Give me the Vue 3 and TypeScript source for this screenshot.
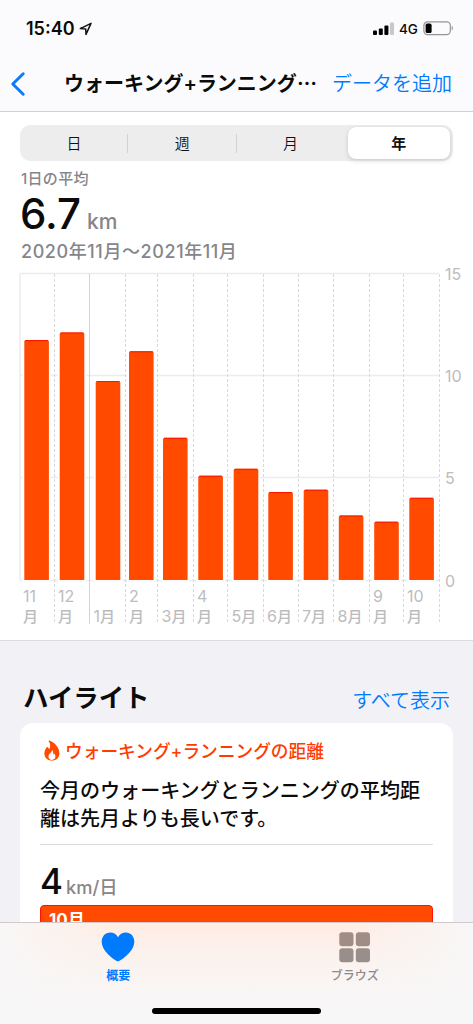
<script setup lang="ts">
import { ref } from 'vue'

interface MonthBar {
  x: number
  top: number
  tick: number
  num: string
  wrap: boolean
  labelX: number
}

const ranges = ['日', '週', '月', '年']
const selected = ref(3)

const base = 580
const months: MonthBar[] = [
  { x: 24.3, top: 340, tick: 54.5, num: '11', wrap: true, labelX: 23 },
  { x: 59.7, top: 332.5, tick: 89.5, num: '12', wrap: true, labelX: 58 },
  { x: 95.7, top: 381, tick: 125.5, num: '1', wrap: false, labelX: 93.5 },
  { x: 129, top: 351.3, tick: 157.5, num: '2', wrap: true, labelX: 129 },
  { x: 163, top: 437.8, tick: 193.5, num: '3', wrap: false, labelX: 161.5 },
  { x: 198.3, top: 475.7, tick: 227.5, num: '4', wrap: true, labelX: 197 },
  { x: 233.7, top: 468.8, tick: 263.5, num: '5', wrap: false, labelX: 231.5 },
  { x: 268.3, top: 492, tick: 298.5, num: '6', wrap: false, labelX: 267 },
  { x: 303.7, top: 489.7, tick: 333.5, num: '7', wrap: false, labelX: 302 },
  { x: 338.8, top: 515.5, tick: 369.5, num: '8', wrap: false, labelX: 337.5 },
  { x: 374.2, top: 521.7, tick: 403.5, num: '9', wrap: true, labelX: 373 },
  { x: 409.3, top: 497.8, tick: 439.5, num: '10', wrap: true, labelX: 407 },
]
const levels = [
  { y: 273.5, label: '15' },
  { y: 375.5, label: '10' },
  { y: 477.5, label: '5' },
  { y: 580.5, label: '0' },
]
</script>

<template>
  <div class="screen">
    <header class="top">
      <div class="status">
        <span class="time">15:40</span>
        <svg class="loc" width="14" height="14" viewBox="0 0 14 14">
          <path d="M1.3 6.6 12 1.4 7 12.4 6.7 7Z" fill="none" stroke="#111" stroke-width="1.5" stroke-linejoin="round" />
        </svg>
        <svg class="signal" width="22" height="14" viewBox="0 0 22 14">
          <rect x="0" y="8.6" width="4" height="4.4" rx="1" />
          <rect x="5.8" y="6.4" width="4" height="6.6" rx="1" />
          <rect x="11.4" y="3.6" width="4" height="9.4" rx="1" />
          <rect x="17" y="0.6" width="4" height="12.4" rx="1" fill="#c8c8ca" />
        </svg>
        <span class="net">4G</span>
        <svg class="battery" width="31" height="15" viewBox="0 0 31 15">
          <rect x="0.9" y="0.9" width="26.4" height="12.8" rx="3.6" fill="none" stroke="#949496" stroke-width="1.2" />
          <rect x="2.6" y="2.6" width="6" height="9.4" rx="1.6" fill="#000" />
          <path d="M28.7 5.1c1.6.6 1.6 3.8 0 4.4z" fill="#949496" />
        </svg>
      </div>
      <nav class="nav">
        <svg class="back" width="16" height="26" viewBox="0 0 16 26">
          <path d="M13.2 2.8 2.8 13l10.4 10.2" fill="none" stroke="#0a7aff" stroke-width="3" stroke-linecap="round" stroke-linejoin="round" />
        </svg>
        <h1 class="title">ウォーキング<span class="plus">+</span>ランニング<span class="dots">⋯</span></h1>
        <a class="add">データを追加</a>
      </nav>
    </header>

    <main class="body">
      <section class="summary">
        <div class="segments">
          <button
            v-for="(r, i) in ranges"
            :key="r"
            class="segment"
            :class="{ on: i === selected, line: i < 2 }"
            @click="selected = i"
          >{{ r }}</button>
        </div>
        <p class="caption">1日の平均</p>
        <p class="average"><span class="value">6.7</span><span class="unit">km</span></p>
        <p class="period">2020年11月〜2021年11月</p>
        <svg class="chart" width="473" height="378" viewBox="0 262 473 378">
          <g class="grid">
            <path v-for="l in levels" :key="l.label" :d="`M20 ${l.y}H439`" />
            <path d="M20 273V580" />
          </g>
          <path
            v-for="m in months"
            :key="m.tick"
            class="tick"
            :class="{ year: m.num === '12' }"
            :d="`M${m.tick} 274V624`"
          />
          <g v-for="m in months" :key="m.num">
            <rect :x="m.x - 2" :y="m.top - 1" width="28.6" :height="base - m.top + 2" fill="#fff" />
            <path
              class="bar"
              :d="`M${m.x} ${base}V${m.top + 1.5}q0 -1.5 1.5 -1.5h21.6q1.5 0 1.5 1.5V${base}z`"
            />
            <path class="edge" :d="`M${m.x + 1} ${m.top + 0.5}h22.6`" />
            <template v-if="m.wrap">
              <text :x="m.labelX" y="602.3">{{ m.num }}</text>
              <text class="kanji" :x="m.labelX" y="621.5">月</text>
            </template>
            <text v-else :x="m.labelX" y="621.5">{{ m.num }}<tspan class="kanji">月</tspan></text>
          </g>
          <text v-for="l in levels" :key="l.y" x="445" :y="l.y + 6.3">{{ l.label }}</text>
        </svg>
      </section>

      <section class="highlights">
        <div class="head">
          <h2>ハイライト</h2>
          <a>すべて表示</a>
        </div>
        <article class="card">
          <div class="topic">
            <svg width="16" height="21" viewBox="0 0 16 21">
              <path fill="#ff4a00" fill-rule="evenodd" d="M5.1.4C10.2 1.8 15.4 7.1 15.4 13.2c0 4.3-3 7.4-7.5 7.4S.4 17.7.4 13.5c0-2.5 1-4.7 2.4-6.3.5-.5 1.1-.3 1.4.3.3.7.7 1.2 1.3 1.4C6.6 6.5 6.5 3.6 4.7 1.2 4.4.7 4.6.3 5.1.4ZM8 9.7c.3 2.5-3.5 3.6-3.5 7 0 2 1.5 3.2 3.4 3.2s3.5-1.2 3.5-3.3c0-1.4-.6-2.5-1.2-3-.2.7-.5 1-.9 1.2.2-1.9-.2-3.9-1.3-5.1Z" />
            </svg>
            <span>ウォーキング+ランニングの距離</span>
          </div>
          <p class="message">今月のウォーキングとランニングの平均距離は先月よりも長いです。</p>
          <p class="rate"><span class="num">4</span><span class="per">km/日</span></p>
          <div class="meter">10月</div>
        </article>
      </section>
    </main>

    <footer class="tabs">
      <div class="tab active">
        <svg width="34" height="30" viewBox="0 0 34 30">
          <path fill="#007aff" d="M17 29.6C15.5 29.4.7 20.5.7 9.6.7 4.3 4.3.5 9.2.5c3.5 0 6.3 1.9 7.8 4.7C18.5 2.4 21.3.5 24.8.5c4.9 0 8.5 3.8 8.5 9.1C33.3 20.5 18.5 29.4 17 29.6Z" />
        </svg>
        <span>概要</span>
      </div>
      <div class="tab browse">
        <svg width="32" height="31" viewBox="0 0 32 31">
          <g fill="#a08e86">
            <rect x="0.3" y="0.2" width="14.2" height="14" rx="3" />
            <rect x="16.8" y="0.2" width="14.2" height="14" rx="3" />
          </g>
          <g fill="#998e8a">
            <rect x="0.3" y="16.2" width="14.2" height="14" rx="3" />
            <rect x="16.8" y="16.2" width="14.2" height="14" rx="3" />
          </g>
        </svg>
        <span>ブラウズ</span>
      </div>
      <div class="home"></div>
    </footer>
  </div>
</template>

<style>
body {
  margin: 0;
  background: #fff;
}
</style>

<style scoped>
.screen {
  width: 473px;
  height: 1024px;
  overflow: hidden;
  display: flex;
  flex-direction: column;
  background: #fff;
  color: #0b0b0b;
  font-family: Inter, "Noto Sans CJK JP", sans-serif;
}
p, h1, h2 {
  margin: 0;
}
.top {
  height: 112px;
  flex: none;
  box-sizing: border-box;
  background: #fbfbfd;
  border-bottom: 1px solid #d0d0d2;
}
.status {
  display: flex;
  align-items: center;
  height: 57px;
  padding: 0 19px 0 26px;
}
.time {
  width: 53px;
  font-size: 18px;
  font-weight: 600;
}
.loc {
  margin-right: auto;
}
.net {
  width: 24px;
  margin-left: 4px;
  font-size: 13.5px;
  font-weight: 500;
}
.nav {
  display: flex;
  align-items: center;
  height: 54px;
  padding-left: 10px;
}
.title {
  margin-left: 38px;
  width: 253px;
  font-size: 20px;
  font-weight: 700;
  line-height: 30px;
  white-space: nowrap;
}
.plus {
  font-weight: 600;
}
.dots {
  display: inline-block;
  width: 20px;
}
.add {
  margin-left: 15px;
  font-size: 20px;
  font-weight: 350;
  line-height: 30px;
  color: #007aff;
  white-space: nowrap;
}
.body {
  flex: none;
  height: 811px;
  overflow: hidden;
}
.summary {
  display: flow-root;
  height: 528px;
  border-bottom: 1px solid #dcdce0;
}
.segments {
  display: grid;
  grid-template-columns: repeat(4, 1fr);
  box-sizing: border-box;
  height: 36px;
  margin: 13px 20px 0;
  border-radius: 10px;
  background: #ededee;
}
.segment {
  display: flex;
  align-items: center;
  justify-content: center;
  padding: 1px 0 0;
  border: 0;
  background: none;
  color: #111;
  font: 350 15px/20px Inter, "Noto Sans CJK JP", sans-serif;
}
.segment.line, .segment:nth-child(2) {
  background: linear-gradient(#d2d2d5, #d2d2d5) right center / 1px 19px no-repeat;
}
.segment.on {
  margin: 2px 3px 2px 3px;
  border-radius: 8px;
  background: #fff;
  font-weight: 700;
  box-shadow: 0 2px 5px rgba(0, 0, 0, 0.13), 0 0 1px rgba(0, 0, 0, 0.12);
}
.caption {
  margin: 6px 0 0 21px;
  font-size: 15px;
  font-weight: 500;
  line-height: 23px;
  letter-spacing: 0.3px;
  color: #86868a;
}
.average {
  display: flex;
  align-items: baseline;
  height: 47px;
  margin-left: 20px;
  line-height: 48px;
}
.value {
  width: 67px;
  font-size: 42px;
  font-weight: 500;
}
.unit {
  font-size: 21px;
  font-weight: 500;
  color: #86868a;
}
.period {
  height: 25px;
  margin-left: 21px;
  font-size: 18px;
  font-weight: 500;
  line-height: 29px;
  letter-spacing: 0.58px;
  color: #86868a;
}
.chart {
  display: block;
}
.grid path {
  stroke: #ececee;
  fill: none;
  stroke-width: 1.5;
}
.tick {
  stroke: #d9d9db;
  stroke-width: 1;
  stroke-dasharray: 3 2;
}
.tick.year {
  stroke: #d3d3d5;
  stroke-dasharray: none;
}
.bar {
  fill: #ff4a00;
}
.edge {
  stroke: #ff1400;
  stroke-width: 1;
}
.chart text {
  fill: #bcbcbe;
  font-size: 16px;
}
.chart .kanji {
  font-size: 15px;
  font-weight: 500;
}
.highlights {
  display: flow-root;
  height: 400px;
  background: #f2f1f6;
}
.head {
  display: flex;
  justify-content: space-between;
  align-items: center;
  height: 56px;
  margin-top: 27px;
  padding: 0 23px 0 23px;
}
.head h2 {
  margin-top: 4px;
  font-size: 25.4px;
  font-weight: 700;
  line-height: 36px;
}
.head a {
  margin-top: 10px;
  font-size: 20px;
  font-weight: 350;
  line-height: 30px;
  color: #007aff;
}
.card {
  height: 300px;
  margin: -1px 20px 0;
  padding: 14px 20px 0;
  box-sizing: border-box;
  display: flow-root;
  border-radius: 13px;
  background: #fff;
}
.topic {
  display: flex;
  align-items: center;
  height: 26px;
  padding-left: 4px;
  gap: 5px;
  font-size: 17.7px;
  font-weight: 500;
  color: #ff3c00;
  white-space: nowrap;
}
.message {
  height: 82px;
  padding-top: 14px;
  box-sizing: border-box;
  border-bottom: 1px solid #dcdce0;
  font-size: 20.05px;
  font-weight: 500;
  line-height: 28px;
  width: 393px;
  word-break: break-all;
}
.rate {
  display: flex;
  align-items: baseline;
  height: 60px;
  line-height: 72px;
}
.num {
  width: 26px;
  font-size: 35px;
  font-weight: 500;
}
.per {
  font-size: 18.3px;
  font-weight: 500;
  color: #86868a;
}
.meter {
  height: 40px;
  width: 393px;
  box-sizing: border-box;
  padding: 2px 8px;
  border: 1px solid #ff1400;
  border-radius: 4px;
  background: #ff4a00;
  color: #fff;
  font-size: 17px;
  font-weight: 700;
  line-height: 24px;
}
.tabs {
  position: relative;
  flex: none;
  display: flex;
  height: 101px;
  box-sizing: border-box;
  background:
    linear-gradient(90deg, #f8f7f7 0, rgba(248, 247, 247, 0) 25%, rgba(248, 247, 247, 0) 75%, #f8f7f7 100%),
    linear-gradient(#ffece3 0, #fbf2ee 35%, #f8f7f7 75%);
  box-shadow: 0 -1px 0 #cfc9cb;
}
.tab {
  flex: 1;
  display: flex;
  flex-direction: column;
  align-items: center;
  padding-top: 9px;
  font-size: 12px;
  font-weight: 500;
  line-height: 18px;
}
.tab span {
  margin-top: 5px;
}
.tab.active {
  color: #007aff;
  font-weight: 700;
}
.tab.browse {
  color: #8f8886;
}
.tab.browse span {
  margin-top: 4px;
}
.home {
  position: absolute;
  left: 152px;
  bottom: 10px;
  width: 169px;
  height: 6px;
  border-radius: 3px;
  background: #000;
}
</style>
